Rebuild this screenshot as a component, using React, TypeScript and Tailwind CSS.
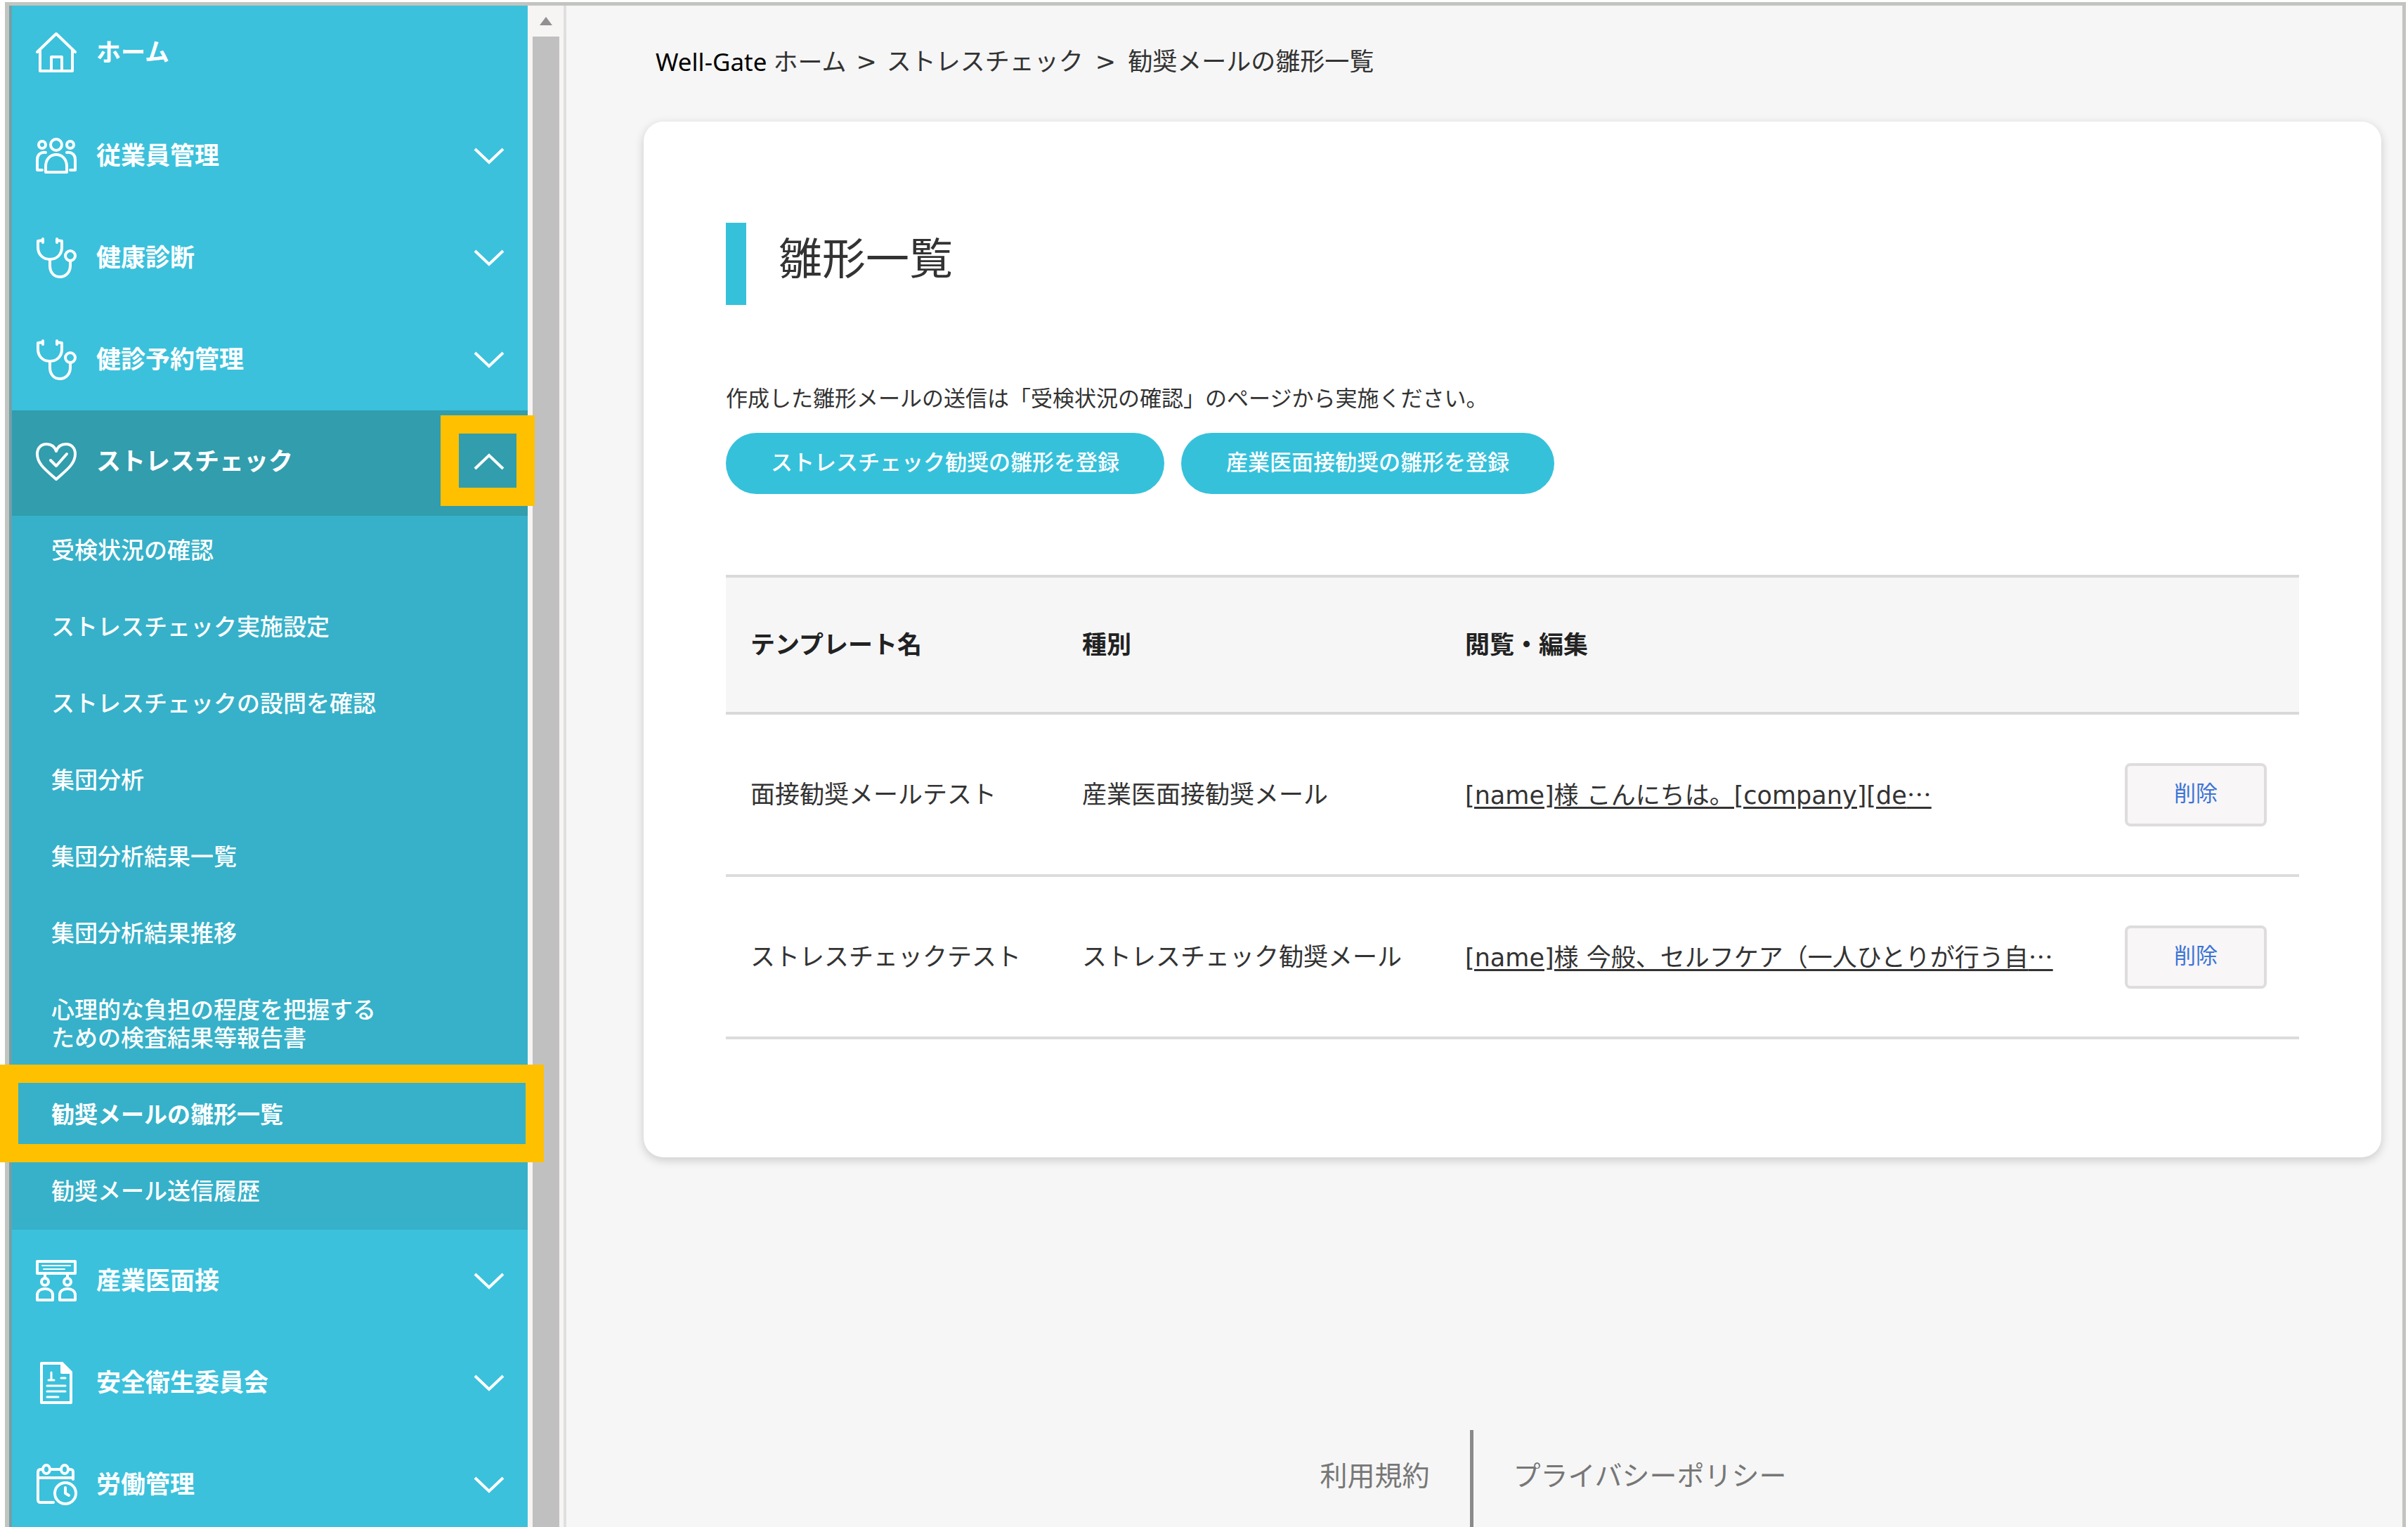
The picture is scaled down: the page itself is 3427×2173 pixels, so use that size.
import type { ReactNode } from 'react'
import clsx from 'clsx'

type MenuItem = {
  label: string
  icon: ReactNode
}

function Icon({ children }: { children: ReactNode }) {
  return (
    <svg
      viewBox="0 0 60 60"
      className="size-[60px] shrink-0"
      fill="none"
      stroke="currentColor"
      strokeWidth={4}
      strokeLinecap="round"
      strokeLinejoin="round"
      aria-hidden="true"
    >
      {children}
    </svg>
  )
}

const homeIcon = (
  <Icon>
    <path d="M3 29 L30 3 L57 29" />
    <path d="M7 27 V56 H53 V27" />
    <path d="M23 56 V36 H38 V56" />
  </Icon>
)

const peopleIcon = (
  <Icon>
    <circle cx="30" cy="14" r="8" />
    <circle cx="10" cy="14" r="5" />
    <circle cx="50" cy="14" r="5" />
    <path d="M15 53 V45 C15 34 22 28 30 28 C38 28 45 34 45 45 V53 Z" />
    <path d="M10 50 H3 V35 C3 28 8 24 15 25" />
    <path d="M50 50 H57 V35 C57 28 52 24 45 25" />
  </Icon>
)

const stethoscopeIcon = (
  <Icon>
    <path d="M11 5 L4 6 V15 C4 26 12 32 21 32 C30 32 38 26 38 15 V6 L31 5" />
    <path d="M11 3 V8 M31 3 V8" />
    <path d="M21 32 V41 C21 51 27 57 35 57 C44 57 50 50 50 41 V34" />
    <circle cx="50" cy="27" r="7" />
  </Icon>
)

const heartIcon = (
  <Icon>
    <path d="M30 55 C17 43 3 34 3 19 C3 10 9 5 16 5 C23 5 28 9 30 15 C32 9 37 5 44 5 C51 5 57 10 57 19 C57 34 43 43 30 55 Z" />
    <path d="M22 28 L30 36 L45 19" />
  </Icon>
)

const interviewIcon = (
  <Icon>
    <path d="M3 2 H57 V19 H3 Z" />
    <path d="M10 8 H50 M12 13 H42" strokeWidth={2} />
    <circle cx="14" cy="31" r="5" />
    <circle cx="46" cy="31" r="5" />
    <path d="M14 19 V25 M46 19 V25" />
    <path d="M3 57 V50 C3 44 8 41 14 41 C20 41 25 44 25 50 V57 Z" />
    <path d="M35 57 V50 C35 44 40 41 46 41 C52 41 57 44 57 50 V57 Z" />
  </Icon>
)

const documentIcon = (
  <Icon>
    <path d="M9 2 H38 L51 15 V58 H9 Z" />
    <path d="M38 2 V15 H51 Z" fill="currentColor" />
    <path d="M23 15 V26 M19 26 H27 M37 23 H43" strokeWidth={3} />
    <path d="M17 34 H43 M17 42 H43 M17 50 H33" strokeWidth={3} />
  </Icon>
)

const calendarIcon = (
  <Icon>
    <path d="M26 55 H8 C5 55 4 54 4 51 V12 C4 9 6 8 8 8 H10 M22 8 H36 M48 8 H50 C53 8 54 9 54 12 V22" />
    <path d="M4 20 H54" />
    <ellipse cx="16" cy="8" rx="5" ry="6" />
    <ellipse cx="42" cy="8" rx="5" ry="6" />
    <circle cx="43" cy="42" r="15" />
    <path d="M43 34 V42 L48 45" />
  </Icon>
)

const topMenu: MenuItem[] = [
  { label: '従業員管理', icon: peopleIcon },
  { label: '健康診断', icon: stethoscopeIcon },
  { label: '健診予約管理', icon: stethoscopeIcon },
]

const bottomMenu: MenuItem[] = [
  { label: '産業医面接', icon: interviewIcon },
  { label: '安全衛生委員会', icon: documentIcon },
  { label: '労働管理', icon: calendarIcon },
]

const subMenu = [
  { label: '受検状況の確認' },
  { label: 'ストレスチェック実施設定' },
  { label: 'ストレスチェックの設問を確認' },
  { label: '集団分析' },
  { label: '集団分析結果一覧' },
  { label: '集団分析結果推移' },
  { label: '心理的な負担の程度を把握する\nための検査結果等報告書' },
  { label: '勧奨メールの雛形一覧', current: true },
  { label: '勧奨メール送信履歴' },
]

const templates = [
  {
    name: '面接勧奨メールテスト',
    type: '産業医面接勧奨メール',
    body: '[name]様 こんにちは。[company][de',
  },
  {
    name: 'ストレスチェックテスト',
    type: 'ストレスチェック勧奨メール',
    body: '[name]様 今般、セルフケア（一人ひとりが行う自',
  },
]

function Chevron({ up }: { up?: boolean }) {
  return (
    <svg
      viewBox="0 0 46 24"
      className="ml-auto h-6 w-[46px]"
      fill="none"
      stroke="currentColor"
      strokeWidth={4}
      aria-hidden="true"
    >
      <path d={up ? 'M3 22 L23 3 L43 22' : 'M3 2 L23 21 L43 2'} />
    </svg>
  )
}

function MenuButton({ item }: { item: MenuItem }) {
  return (
    <button
      type="button"
      className="flex h-[145px] w-full cursor-pointer items-center gap-[27px] pr-8 pl-[33px] text-left text-[35px] leading-[48px] font-bold"
    >
      {item.icon}
      <span>{item.label}</span>
      <Chevron />
    </button>
  )
}

function Sidebar() {
  return (
    <aside className="w-[738px] shrink-0 border-l-4 border-[#6fa0aa] bg-[#3bc1dc] text-white">
      <nav aria-label="メインメニュー">
        <a
          href="#home"
          className="flex h-[141px] items-center gap-[27px] pb-2 pl-[33px] text-[35px] leading-[48px] font-bold"
        >
          {homeIcon}
          <span>ホーム</span>
        </a>
        {topMenu.map((item) => (
          <MenuButton key={item.label} item={item} />
        ))}

        <div className="relative bg-[#319dad]">
          <button
            type="button"
            aria-expanded="true"
            className="flex h-[150px] w-full cursor-pointer items-center gap-[27px] pr-8 pb-1 pl-[33px] text-left text-[35px] leading-[48px] font-bold"
          >
            {heartIcon}
            <span>ストレスチェック</span>
            <Chevron up />
          </button>
          <div className="pointer-events-none absolute top-[7px] -right-[10px] z-10 h-[129px] w-[134px] border-[26px] border-[#ffc000]" />
        </div>

        <ul className="flex flex-col gap-[69px] bg-[#36b1c9] pt-[30px] pb-[34px] pl-14 text-[33px] leading-[40px] font-medium">
          {subMenu.map((item) => (
            <li key={item.label} className={clsx('whitespace-pre-line', item.current && 'relative font-bold')}>
              <a href="#menu" aria-current={item.current ? 'page' : undefined}>
                {item.label}
              </a>
              {item.current && (
                <div className="pointer-events-none absolute -top-[52px] -right-[23px] -left-[73px] z-10 h-[139px] border-[26px] border-[#ffc000]" />
              )}
            </li>
          ))}
        </ul>

        {bottomMenu.map((item) => (
          <MenuButton key={item.label} item={item} />
        ))}
      </nav>
    </aside>
  )
}

function ScrollTrack() {
  return (
    <div className="flex w-[55px] shrink-0 flex-col border-r-4 border-[#dfdfdf] bg-[#f7f4f4] pr-[6px] pl-[7px]" aria-hidden="true">
      <div className="flex h-11 items-center justify-center">
        <svg viewBox="0 0 18 12" className="h-3 w-[18px]" fill="#929090">
          <path d="M9 0 L18 12 H0 Z" />
        </svg>
      </div>
      <div className="flex-1 bg-[#c1c0c1]" />
    </div>
  )
}

function Breadcrumb() {
  return (
    <nav aria-label="パンくずリスト" className="pt-[50px] pl-[17px] text-[35px] leading-[60px] text-[#333]">
      <ol className="flex">
        <li>
          <a href="#home">
            <span className="font-['Noto_Sans',sans-serif] text-black">Well-Gate </span>
            ホーム
          </a>
        </li>
        <li className="px-[14px]" aria-hidden="true">&gt;</li>
        <li>
          <a href="#stress">ストレスチェック</a>
        </li>
        <li className="px-[17px]" aria-hidden="true">&gt;</li>
        <li aria-current="page">勧奨メールの雛形一覧</li>
      </ol>
    </nav>
  )
}

function TemplateTable() {
  return (
    <table className="mt-[115px] w-full table-fixed border-collapse text-left text-[35px] leading-[48px]">
      <colgroup>
        <col className="w-[472px]" />
        <col className="w-[545px]" />
        <col />
        <col className="w-[282px]" />
      </colgroup>
      <thead>
        <tr className="h-[195px] border-y-4 border-[#d9d9da] bg-[#f6f6f7] text-[#222]">
          <th className="pl-[35px] font-bold">テンプレート名</th>
          <th className="pl-[35px] font-bold">種別</th>
          <th className="pl-[35px] font-bold">閲覧・編集</th>
          <td />
        </tr>
      </thead>
      <tbody>
        {templates.map((row) => (
          <tr key={row.name} className="h-[231px] border-b-4 border-[#dcdcdc]">
            <td className="pl-[35px]">{row.name}</td>
            <td className="pl-[35px]">{row.type}</td>
            <td className="pl-[35px]">
              <a href="#template" className="underline decoration-3 underline-offset-4">
                {row.body}
                <span className="font-['Noto_Sans_CJK_JP',sans-serif]">…</span>
              </a>
            </td>
            <td className="pr-[46px] text-right">
              <button
                type="button"
                className="h-[90px] w-[202px] cursor-pointer rounded-lg border-4 border-[#dfdcdd] bg-[#f8f6f7] pb-1 text-[31px] text-[#3d74d6]"
              >
                削除
              </button>
            </td>
          </tr>
        ))}
      </tbody>
    </table>
  )
}

export default function App() {
  return (
    <div
      lang="ja"
      className="h-screen overflow-hidden bg-white pt-[3px] pr-[3px] pl-[7px] font-['DejaVu_Sans','Noto_Sans_CJK_JP',sans-serif] text-[#333]"
    >
      <div className="flex h-full border-t-[5px] border-r-[5px] border-l-[6px] border-[#c2c4bf] bg-[#f6f6f6]">
        <Sidebar />
        <ScrollTrack />

        <div className="flex min-w-0 flex-1 flex-col pr-[30px] pl-[110px]">
          <Breadcrumb />

          <main className="mt-[54px] rounded-[28px] bg-white px-[117px] pt-36 pb-[168px] shadow-[0_4px_14px_rgba(0,0,0,0.18)]">
            <h1 className="border-l-[29px] border-[#36c1db] pb-3 pl-[46px] text-[62px] leading-[105px]">雛形一覧</h1>
            <p className="mt-[109px] text-[31px] leading-[48px]">
              作成した雛形メールの送信は「受検状況の確認」のページから実施ください。
            </p>
            <div className="mt-[25px] flex gap-6 text-[31px] leading-[48px] font-medium text-white">
              <button type="button" className="h-[87px] cursor-pointer rounded-full bg-[#36c1db] px-16 pb-1">
                ストレスチェック勧奨の雛形を登録
              </button>
              <button type="button" className="h-[87px] cursor-pointer rounded-full bg-[#36c1db] px-16 pb-1">
                産業医面接勧奨の雛形を登録
              </button>
            </div>
            <TemplateTable />
          </main>

          <footer className="mt-auto flex h-[138px] justify-center pl-[116px] text-[39px] leading-[132px] text-[#777]">
            <a href="#terms" className="pr-[58px]">利用規約</a>
            <a href="#privacy" className="border-l-[5px] border-[#8a8a8a] pl-[56px]">プライバシーポリシー</a>
          </footer>
        </div>
      </div>
    </div>
  )
}
